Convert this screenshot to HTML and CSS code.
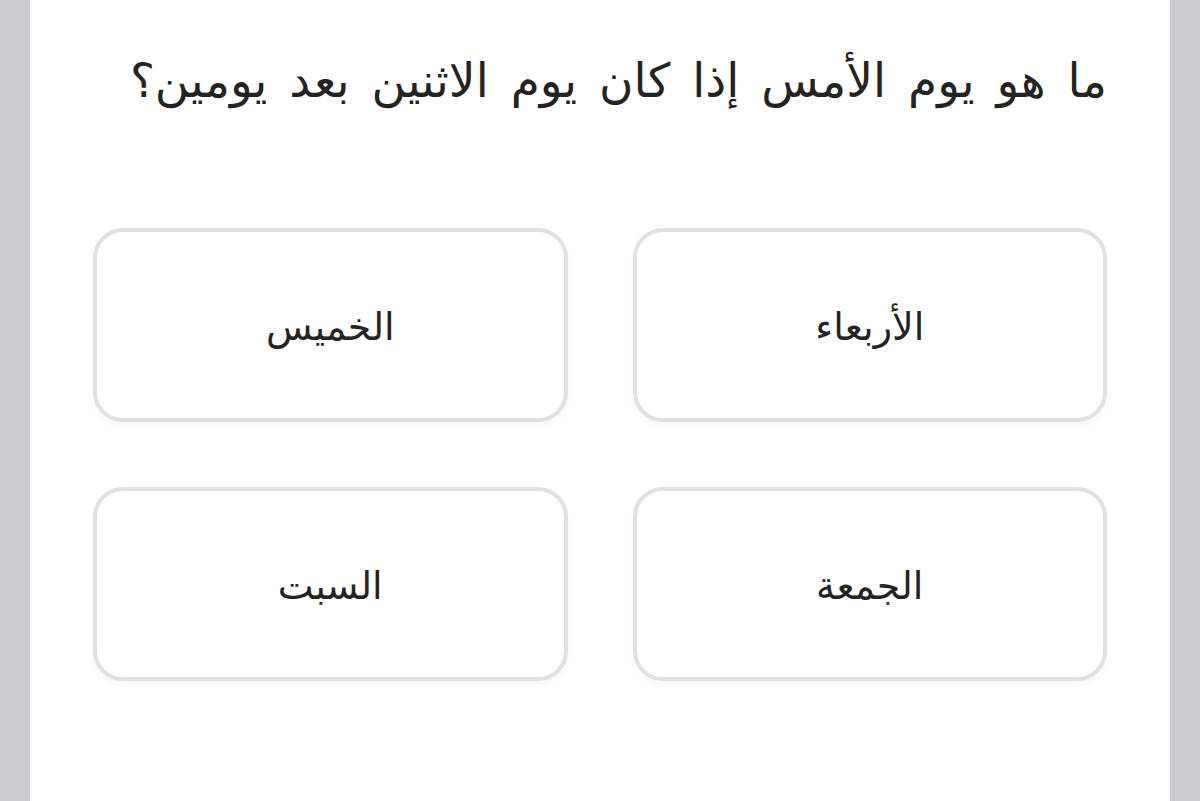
FILE: index.html
```html
<!DOCTYPE html>
<html lang="ar" dir="rtl">
<head>
<meta charset="utf-8">
<link rel="stylesheet" href="styles.css">
</head>
<body>
<div class="card">
  <h1 class="question">ما هو يوم الأمس إذا كان يوم الاثنين بعد يومين؟</h1>
  <div class="options">
    <div class="option">الأربعاء</div>
    <div class="option">الخميس</div>
    <div class="option">الجمعة</div>
    <div class="option">السبت</div>
  </div>
</div>
</body>
</html>
```
FILE: styles.css
```css
html, body {
  margin: 0;
  padding: 0;
  height: 100%;
}
body {
  background: #cacacf;
  font-family: "DejaVu Sans", sans-serif;
  color: #232323;
  overflow: hidden;
}
.card {
  margin: 0 30px;
  height: 100%;
  background: #fff;
  padding: 49px 63px 0 63px;
  box-sizing: border-box;
}
.question {
  margin: 0;
  font-size: 47px;
  font-weight: normal;
  line-height: 64px;
  word-spacing: 7px;
  text-align: right;
}
.options {
  margin-top: 115px;
  display: grid;
  grid-template-columns: 1fr 1fr;
  column-gap: 65px;
  row-gap: 65px;
}
.option {
  height: 194px;
  box-sizing: border-box;
  border: 4px solid #e1e1e3;
  border-radius: 30px;
  display: flex;
  align-items: center;
  justify-content: center;
  padding-top: 4px;
  font-size: 38px;
  box-shadow: 0 4px 10px rgba(0,0,0,0.03);
}
```
